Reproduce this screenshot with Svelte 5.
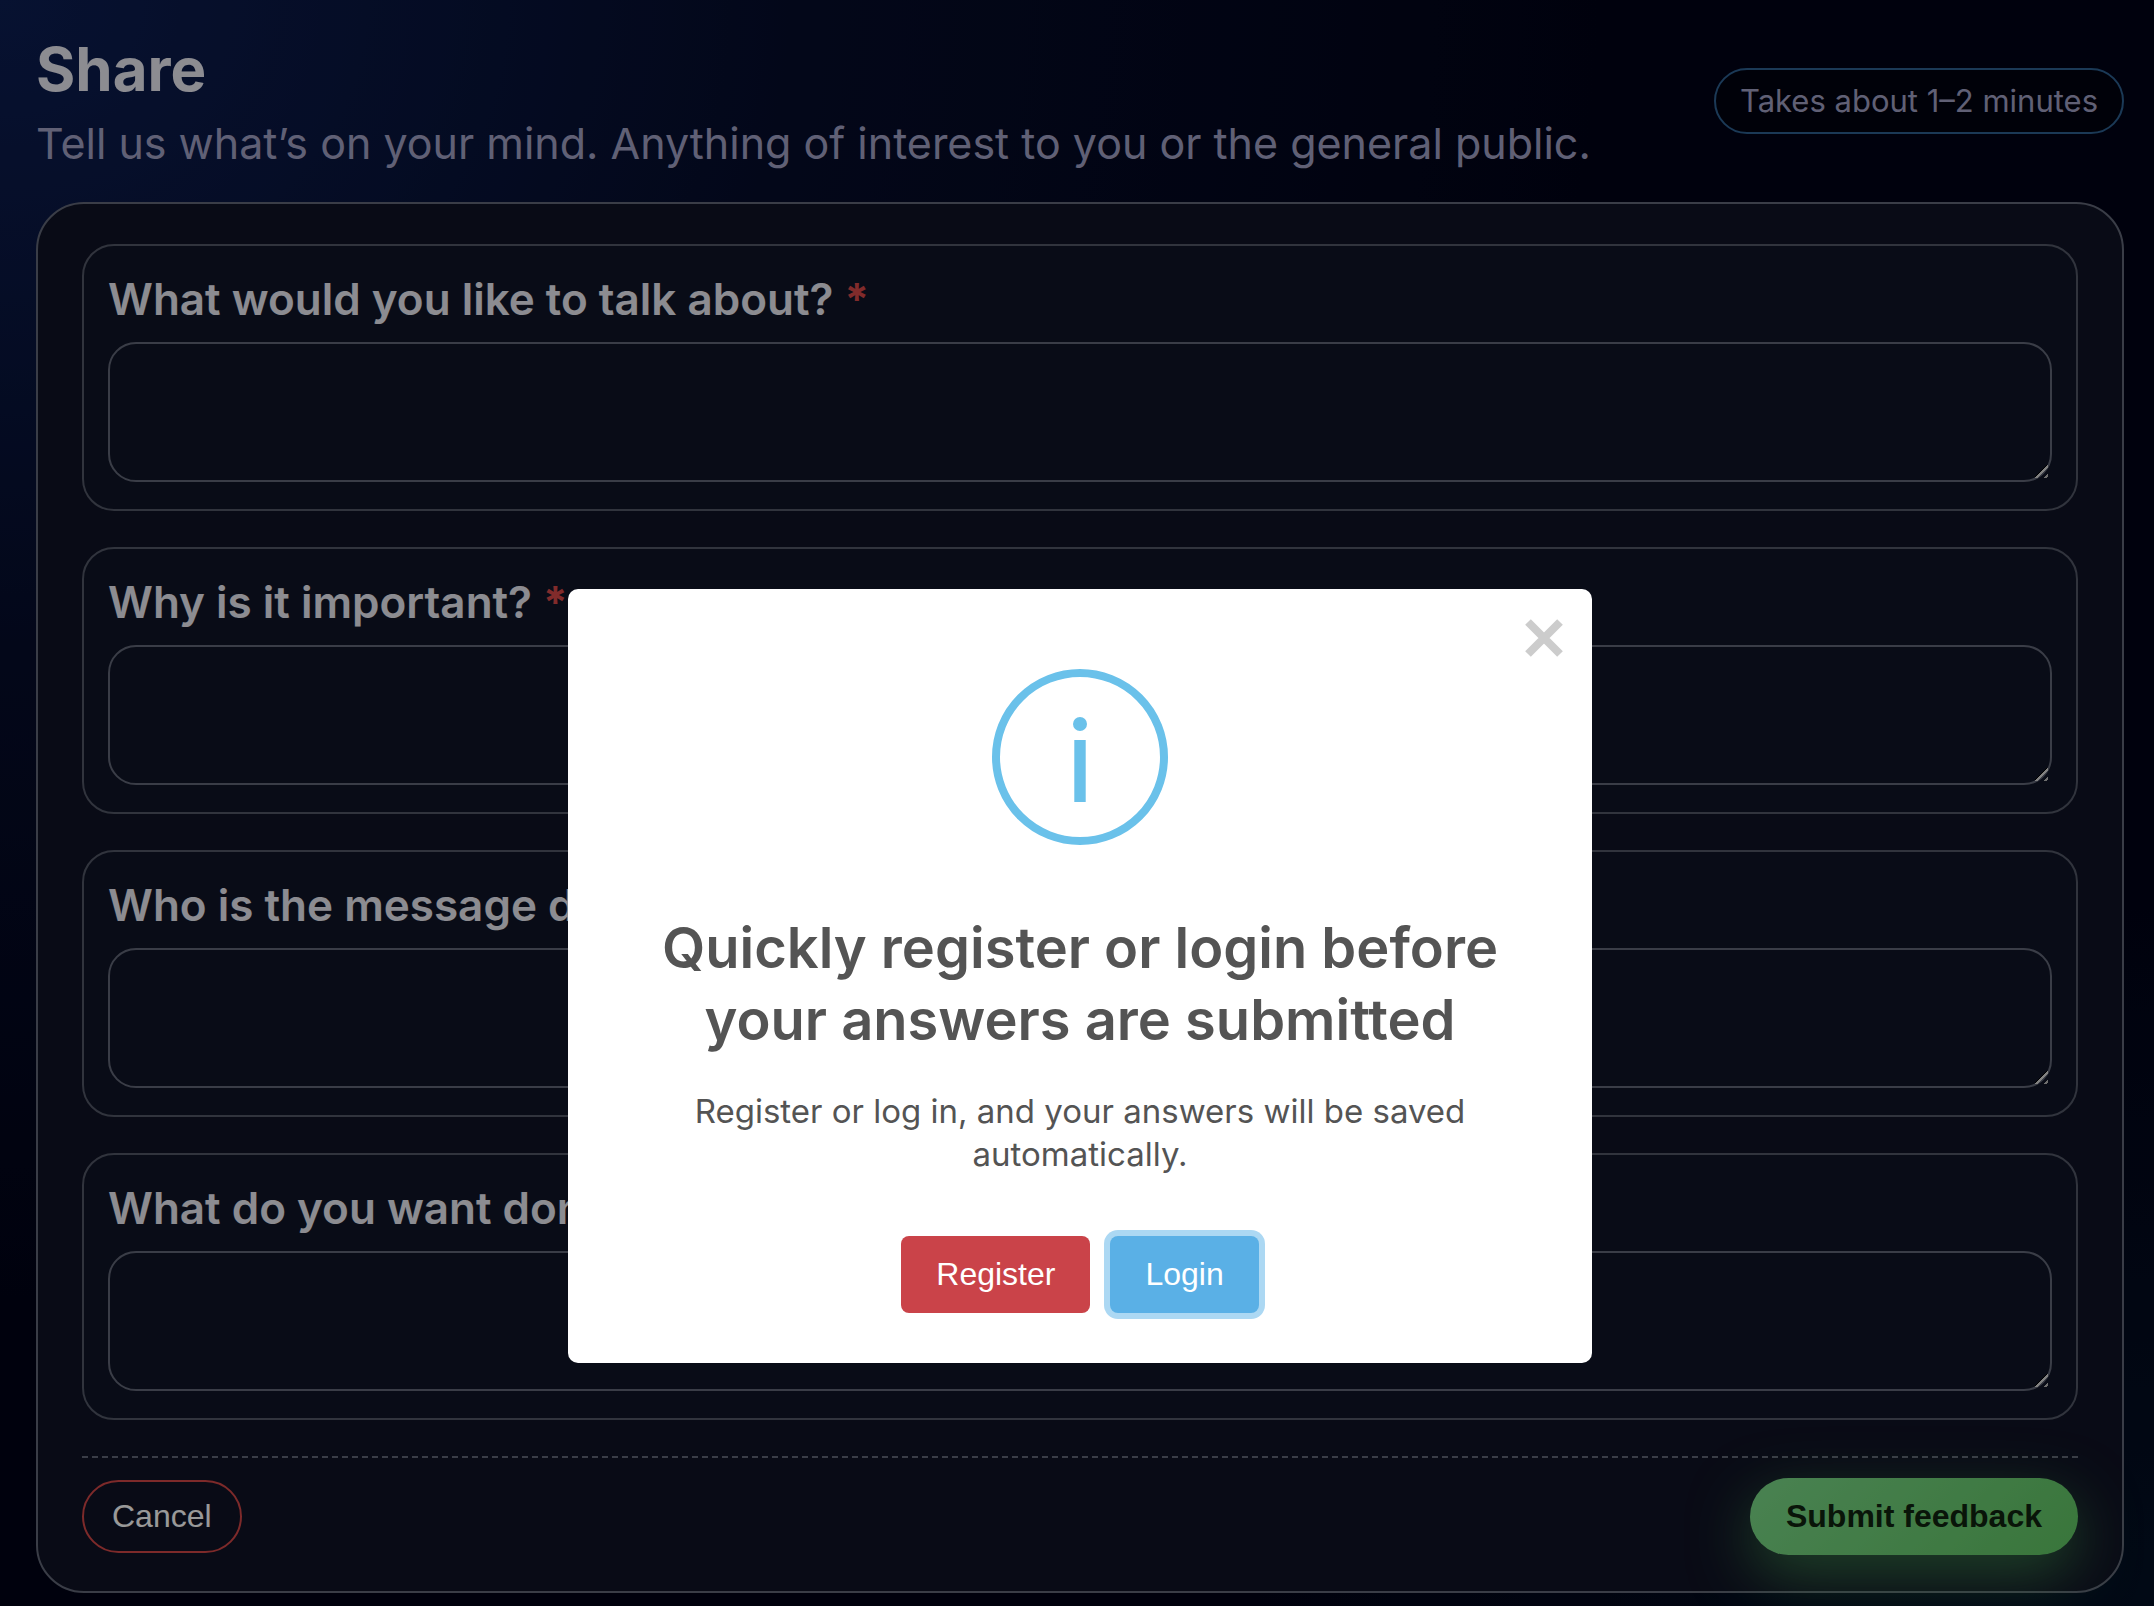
<script>
  const questions = [
    { id: 'topic', label: 'What would you like to talk about?' },
    { id: 'reason', label: 'Why is it important?' },
    { id: 'audience', label: 'Who is the message directed to?' },
    { id: 'outcome', label: 'What do you want done about it?' }
  ];
</script>

<main class="page">
  <header class="header">
    <div class="intro">
      <h1>Share</h1>
      <p>Tell us what’s on your mind. Anything of interest to you or the general public.</p>
    </div>
    <span class="badge">Takes about 1–2 minutes</span>
  </header>

  <form class="panel">
    {#each questions as q (q.id)}
      <div class="card">
        <label for={q.id}>{q.label} <span class="required">*</span></label>
        <textarea id={q.id} required></textarea>
      </div>
    {/each}
    <footer class="actions">
      <button type="button" class="cancel">Cancel</button>
      <button type="submit" class="submit">Submit feedback</button>
    </footer>
  </form>
</main>

<div class="overlay">
  <div class="modal" role="dialog" aria-modal="true" aria-labelledby="modal-title">
    <button type="button" class="close" aria-label="Close">
      <svg viewBox="0 0 40 40" width="40" height="40" aria-hidden="true">
        <path d="M4 4 36 36M36 4 4 36" stroke="currentColor" stroke-width="8" />
      </svg>
    </button>
    <svg class="info" viewBox="0 0 176 176" width="176" height="176" aria-hidden="true">
      <circle cx="88" cy="88" r="84" fill="none" stroke="currentColor" stroke-width="8" />
      <circle cx="88" cy="55" r="7" fill="currentColor" />
      <rect x="82.3" y="71" width="11.4" height="62" fill="currentColor" />
    </svg>
    <h2 id="modal-title">Quickly register or login before your answers are submitted</h2>
    <p>Register or log in, and your answers will be saved automatically.</p>
    <div class="choices">
      <button type="button" class="register">Register</button>
      <button type="button" class="login">Login</button>
    </div>
  </div>
</div>

<style>
  :global(body) {
    background: #02031a;
    font-family: Inter, "Liberation Sans", sans-serif;
  }

  .page {
    box-sizing: border-box;
    min-height: 100vh;
    padding: 30px 30px 13px 36px;
    overflow: hidden;
    color: #e9e9f2;
    background:
      radial-gradient(1600px 1300px at 0 0, #0c1e52, rgba(10, 22, 62, 0.5) 50%, transparent),
      radial-gradient(900px 700px at 100% 100%, #031024, transparent),
      #010317;
  }

  .header {
    display: flex;
    align-items: center;
    justify-content: space-between;
    margin-bottom: 30px;
  }

  .intro {
    display: grid;
    gap: 6px;
  }

  h1,
  h2,
  p {
    margin: 0;
  }

  h1 {
    font-size: 60px;
    line-height: 78px;
    font-weight: 700;
  }

  .intro p {
    font-size: 43px;
    line-height: 58px;
    color: #a0a0c4;
  }

  .badge {
    padding: 11px 24px;
    border: 2px solid #2d6090;
    border-radius: 33px;
    font-size: 31px;
    line-height: 40px;
    white-space: nowrap;
    color: #a0a0c4;
    background: rgba(0, 0, 0, 0.3);
  }

  .panel {
    display: grid;
    gap: 36px;
    padding: 40px 44px 36px;
    border: 2px solid #626777;
    border-radius: 48px;
    background: #101325;
  }

  .card {
    display: grid;
    gap: 14px;
    padding: 24px 24px 27px;
    border: 2px solid #525766;
    border-radius: 32px;
    background: #101527;
  }

  label {
    font-size: 44px;
    line-height: 58px;
    font-weight: 600;
  }

  .required {
    font-weight: 700;
    color: #d84848;
  }

  textarea {
    box-sizing: border-box;
    display: block;
    width: 100%;
    height: 140px;
    margin: 0;
    padding: 20px 24px;
    border: 2px solid #626777;
    border-radius: 28px;
    resize: vertical;
    font: 32px/40px Inter, sans-serif;
    color: inherit;
    background: #101527;
  }

  textarea::-webkit-resizer {
    background:
      linear-gradient(135deg, transparent 8px, #000 8px 9px, #d8d8d8 9px 11px, transparent 11px 15px, #b8b8b8 15px 17px, transparent 17px)
      0 0 / 13px 13px no-repeat;
  }

  button {
    margin: 0;
    border: 0;
    font: 32px/37px "Liberation Sans", Arial, sans-serif;
    cursor: pointer;
  }

  .actions {
    display: flex;
    align-items: center;
    justify-content: space-between;
    padding-top: 20px;
    border-top: 2px dashed #626777;
  }

  .cancel {
    padding: 16px 28px;
    border: 2px solid #d04646;
    border-radius: 37px;
    color: #fff;
    background: transparent;
  }

  .submit {
    padding: 20px 36px;
    border-radius: 39px;
    font-weight: 700;
    color: #10240f;
    background: linear-gradient(135deg, #7bd988, #60c463);
    box-shadow: 0 20px 60px rgba(90, 200, 100, 0.5);
  }

  .overlay {
    position: fixed;
    inset: 0;
    display: flex;
    align-items: flex-start;
    justify-content: center;
    padding: 589px 0 0 6px;
    background: rgba(0, 0, 0, 0.4);
  }

  .modal {
    position: relative;
    box-sizing: border-box;
    display: flex;
    flex-direction: column;
    align-items: center;
    width: 1024px;
    max-width: 100%;
    padding: 80px 84px 50px;
    border-radius: 10px;
    text-align: center;
    color: #545454;
    background: #fff;
  }

  .close {
    position: absolute;
    top: 29px;
    right: 28px;
    display: flex;
    padding: 0;
    color: #ccc;
    background: transparent;
  }

  .info {
    margin-bottom: 67px;
    color: #6ac1ea;
  }

  h2 {
    margin-bottom: 34px;
    font-size: 56px;
    line-height: 72px;
    font-weight: 600;
  }

  .modal p {
    margin-bottom: 60px;
    font-size: 33px;
    line-height: 43px;
  }

  .choices {
    display: flex;
    gap: 20px;
  }

  .register,
  .login {
    padding: 20px 35px;
    border-radius: 8px;
    color: #fff;
  }

  .register {
    background: #ca4349;
  }

  .login {
    background: #5ab0e6;
    box-shadow: 0 0 0 6px #acd8f3;
  }
</style>
